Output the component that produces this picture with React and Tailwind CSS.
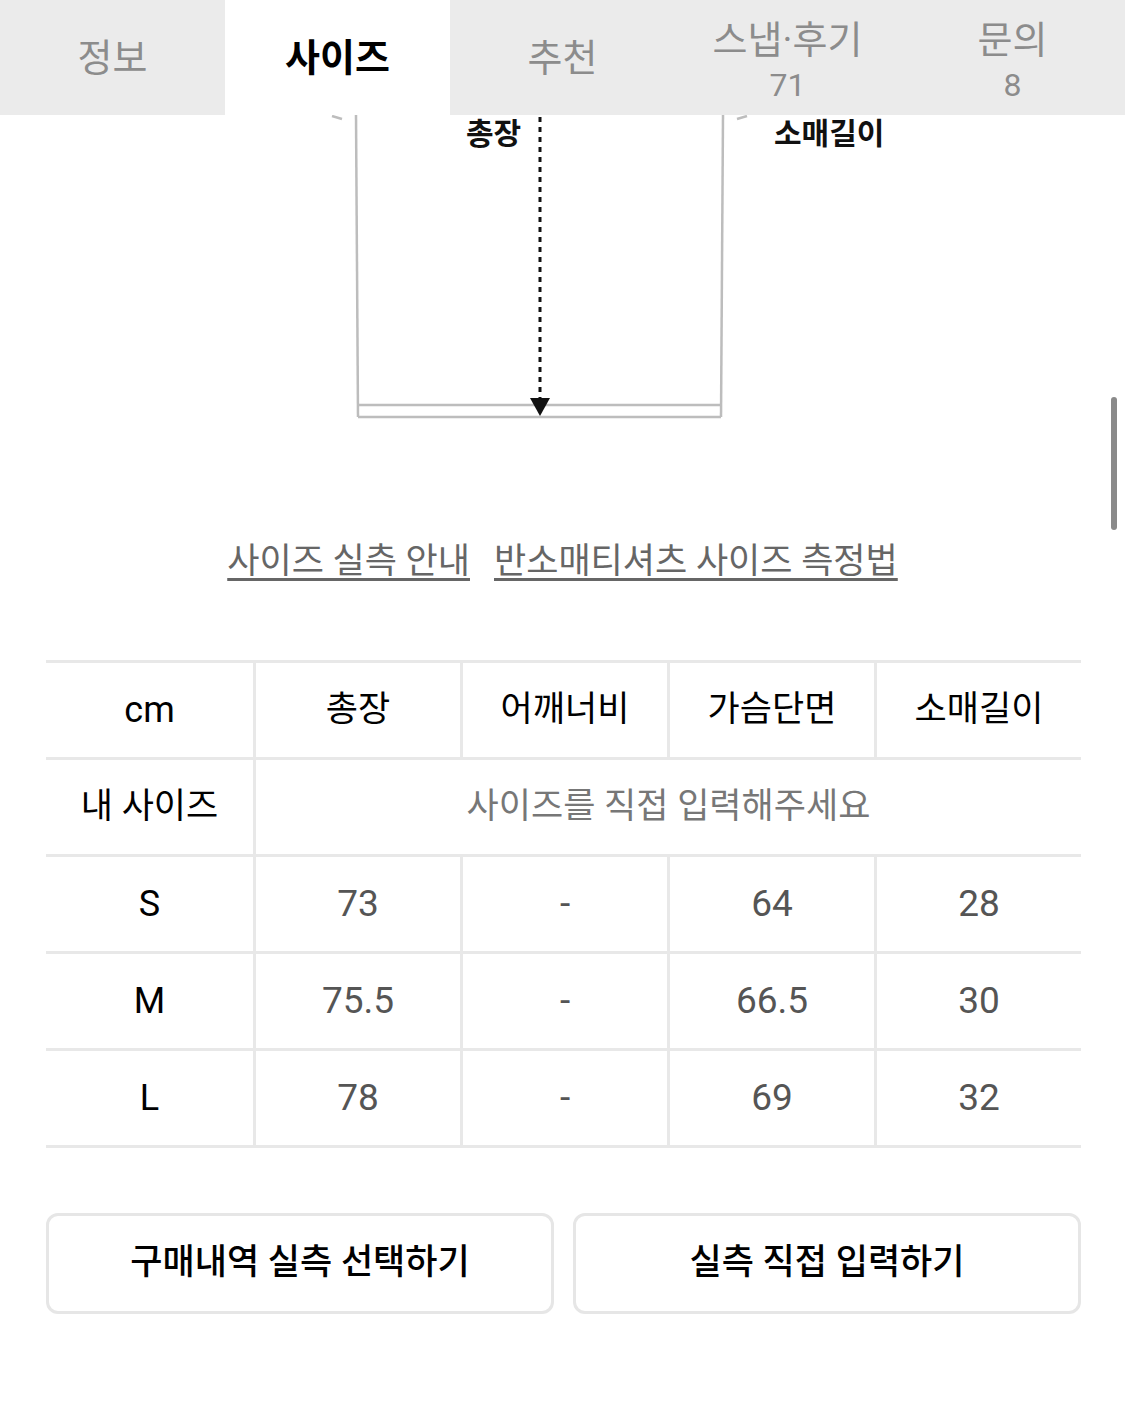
const tabs = [
  { label: "정보" },
  { label: "사이즈", active: true },
  { label: "추천" },
  { label: "스냅·후기", count: "71" },
  { label: "문의", count: "8" },
];

const sizes = [
  { name: "S", values: ["73", "-", "64", "28"] },
  { name: "M", values: ["75.5", "-", "66.5", "30"] },
  { name: "L", values: ["78", "-", "69", "32"] },
];

const cols = ["총장", "어깨너비", "가슴단면", "소매길이"];

const Tabs = () => (
  <div className="flex h-[115px] bg-[#ebebeb]">
    {tabs.map((t) => (
      <div
        key={t.label}
        className={
          t.active
            ? "flex-1 flex items-center justify-center bg-white text-black font-bold text-[38px]"
            : "flex-1 flex flex-col items-center justify-center text-[#8c8c8c] text-[38px]"
        }
      >
        {t.count ? (
          <div className="flex flex-col items-center pt-[10px]">
            <span className="leading-[45px]">{t.label}</span>
            <span className="leading-[45px] text-[32px]">{t.count}</span>
          </div>
        ) : (
          <span className="leading-[46px]">{t.label}</span>
        )}
      </div>
    ))}
  </div>
);

// bottom half of the t-shirt measuring sketch
const Diagram = () => (
  <div className="relative h-[405px]">
    <svg width="1125" height="405" viewBox="0 0 1125 405" className="block">
      <g stroke="#bdbdbd" strokeWidth="2.5" fill="none">
        <line x1="356" y1="0" x2="358" y2="302" />
        <line x1="723" y1="0" x2="721" y2="302" />
        <line x1="358" y1="290" x2="721" y2="290" />
        <line x1="358" y1="302" x2="721" y2="302" />
        <line x1="332" y1="1" x2="342" y2="4" />
        <line x1="737" y1="4" x2="747" y2="1" />
      </g>
      <line x1="540" y1="2" x2="540" y2="284" stroke="#111" strokeWidth="3" strokeDasharray="5 5" />
      <polygon points="530,283 550,283 540,301" fill="#111" />
    </svg>
    <span className="absolute left-[466px] top-[4px] text-[30px] leading-[30px] font-bold text-[#111]">총장</span>
    <span className="absolute left-[774px] top-[4px] text-[30px] leading-[30px] font-bold text-[#111]">소매길이</span>
  </div>
);

const Cell = ({ children, first, className = "" }) => (
  <div
    className={`h-[97px] flex items-center justify-center border-b-[3px] border-[#e8e8e8] ${first ? "" : "border-l-[3px]"} ${className}`}
  >
    {children}
  </div>
);

export default function App() {
  return (
    <div
      className="relative w-[1125px] h-[1406px] bg-white overflow-hidden"
      style={{ fontFamily: "Roboto, 'Noto Sans CJK KR', sans-serif" }}
    >
      <Tabs />
      <Diagram />

      <div className="h-[140px] flex justify-center gap-[24px] pt-[18px] text-[35px] leading-[48px] text-[#666]">
        <span className="underline decoration-[3px] underline-offset-[5px]">사이즈 실측 안내</span>
        <span className="underline decoration-[3px] underline-offset-[5px]">반소매티셔츠 사이즈 측정법</span>
      </div>

      <div className="ml-[46px] w-[1035px] grid grid-cols-5 border-t-[3px] border-[#e8e8e8]">
        <Cell first className="text-[36px] text-black">cm</Cell>
        {cols.map((c) => (
          <Cell key={c} className="text-[35px] text-black">{c}</Cell>
        ))}
        <Cell first className="text-[35px] text-black">내 사이즈</Cell>
        <Cell className="col-span-4 text-[35px] text-[#777]">사이즈를 직접 입력해주세요</Cell>
        {sizes.map((s) => (
          <div key={s.name} className="contents">
            <Cell first className="text-[36px] text-black">{s.name}</Cell>
            {s.values.map((v, i) => (
              <Cell key={i} className="text-[37px] text-[#555]">{v}</Cell>
            ))}
          </div>
        ))}
      </div>

      <div className="ml-[46px] w-[1035px] mt-[65px] flex gap-[19px]">
        <button className="flex-1 h-[101px] border-[3px] border-[#e6e6e6] rounded-[12px] text-[35px] font-medium text-black">
          구매내역 실측 선택하기
        </button>
        <button className="flex-1 h-[101px] border-[3px] border-[#e6e6e6] rounded-[12px] text-[35px] font-medium text-black">
          실측 직접 입력하기
        </button>
      </div>

      <div className="absolute right-[8px] top-[397px] w-[6px] h-[133px] rounded-full bg-[#8a8a8a]" />
    </div>
  );
}
